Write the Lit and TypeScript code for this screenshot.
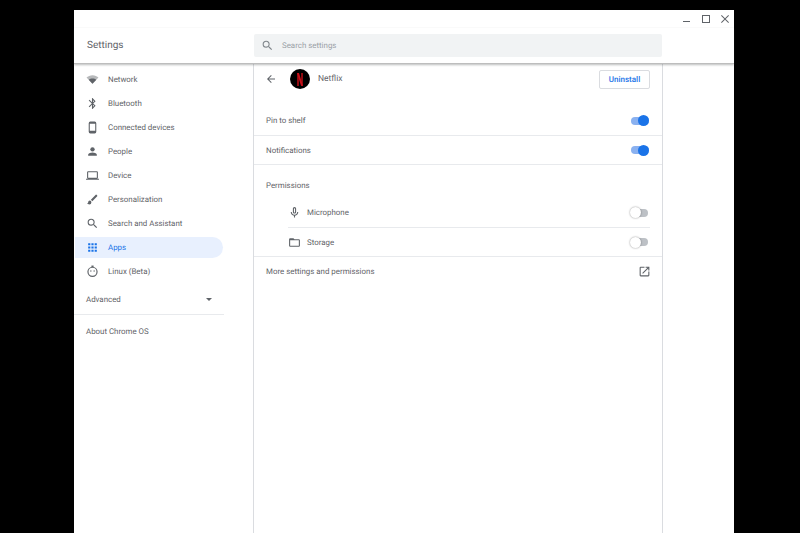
import { LitElement, css, html, svg } from 'lit';
import { customElement } from 'lit/decorators.js';
import { classMap } from 'lit/directives/class-map.js';
import { map } from 'lit/directives/map.js';

const SEARCH = svg`<path d="M15.500 14h-.79l-.28-.27A6.470 6.470 0 0 0 16 9.500 6.500 6.500 0 1 0 9.500 16c1.610 0 3.090-.59 4.230-1.570l.27.28v.79l5 4.990L20.490 19l-4.990-5zm-6 0C7.010 14 5 11.990 5 9.500S7.010 5 9.500 5 14 7.010 14 9.500 11.990 14 9.500 14z"/>`;

const NAV = [
  { label: 'Network', icon: svg`<path d="M12 20 1 8.500C3.500 6 7.500 4 12 4s8.500 2 11 4.500z" opacity=".45"/><path d="M12 20 5 12.500C7 10.800 9.300 10 12 10s5 .8 7 2.500z"/>` },
  { label: 'Bluetooth', icon: svg`<path d="M17.700 7.700 12 2h-1v7.600L6.400 5 5 6.400l5.600 5.600L5 17.600 6.400 19l4.600-4.600V22h1l5.700-5.700-4.300-4.300zM13 5.800l1.900 1.900L13 9.600zm1.900 10.500L13 18.200v-3.800z"/>` },
  { label: 'Connected devices', icon: svg`<path d="M16 1H8a3 3 0 0 0-3 3v16a3 3 0 0 0 3 3h8a3 3 0 0 0 3-3V4a3 3 0 0 0-3-3zm1 17H7V5h10z"/>` },
  { label: 'People', icon: svg`<circle cx="12" cy="8" r="4"/><path d="M12 14c-2.700 0-8 1.300-8 4v2h16v-2c0-2.700-5.300-4-8-4z"/>` },
  { label: 'Device', icon: svg`<path d="M20 18a2 2 0 0 0 2-2V6a2 2 0 0 0-2-2H4a2 2 0 0 0-2 2v10a2 2 0 0 0 2 2H0v2h24v-2zM4 6h16v10H4z"/>` },
  { label: 'Personalization', icon: svg`<path d="M7 14a3 3 0 0 0-3 3c0 1.300-1.200 2-2 2 .9 1.200 2.500 2 4 2a4 4 0 0 0 4-4 3 3 0 0 0-3-3zM20.700 4.600l-1.300-1.300a1 1 0 0 0-1.400 0L9 12.300 11.700 15l9-9a1 1 0 0 0 0-1.400z"/>` },
  { label: 'Search and Assistant', icon: SEARCH },
  { label: 'Apps', icon: svg`<path d="M4 4h4v4H4zm6 0h4v4h-4zm6 0h4v4h-4zM4 10h4v4H4zm6 0h4v4h-4zm6 0h4v4h-4zM4 16h4v4H4zm6 0h4v4h-4zm6 0h4v4h-4z"/>`, active: true },
  { label: 'Linux (Beta)', icon: svg`<path fill-rule="evenodd" d="M12 3a9.500 9.500 0 1 0 0 19 9.500 9.500 0 0 0 0-19zm0 2.200a7.300 7.300 0 1 1 0 14.600 7.300 7.300 0 0 1 0-14.600z"/><rect x="10" y="1" width="4" height="3"/><circle cx="9" cy="11" r="1.300"/><circle cx="15" cy="11" r="1.300"/>` },
];

@customElement('app-root')
export class AppRoot extends LitElement {
  static styles = css`
    :host {
      display: block;
      height: 533px;
      overflow: hidden;
      background: #000;
      font-family: Roboto, 'Liberation Sans', sans-serif;
      font-size: 7.900px;
      text-rendering: geometricPrecision;
      color: #5f6368;
    }

    * {
      box-sizing: border-box;
    }

    svg {
      display: block;
      fill: currentColor;
      flex: none;
    }

    .window {
      display: flex;
      flex-direction: column;
      width: 660px;
      height: 523px;
      margin: 10px 0 0 74px;
      background: #fff;
    }

    .controls {
      display: flex;
      justify-content: flex-end;
      align-items: center;
      gap: 7px;
      height: 18px;
      padding-right: 3px;
    }

    .header {
      display: flex;
      align-items: center;
      height: 36px;
      flex: none;
      border-bottom: 1px solid #bdbdbd;
      box-shadow: 0 1px 2px rgba(60, 64, 67, 0.35);
      position: relative;
    }

    .title {
      width: 180px;
      padding-left: 13px;
      font-size: 10px;
    }

    .search {
      display: flex;
      align-items: center;
      gap: 8px;
      width: 408px;
      height: 23px;
      padding-left: 7px;
      background: #f1f3f4;
      border-radius: 2px;
      color: #80868b;
    }

    .search span {
      color: #9aa0a6;
    }

    .body {
      display: flex;
      flex: 1;
      min-height: 0;
    }

    .nav {
      width: 179px;
      flex: none;
      padding-top: 5px;
    }

    .item {
      display: flex;
      align-items: center;
      gap: 9px;
      width: 148px;
      height: 21px;
      margin: 0 0 3px 1px;
      padding-left: 11px;
      border-radius: 0 11px 11px 0;
    }

    .item.active {
      background: #e8f0fe;
      color: #1a73e8;
    }

    .advanced {
      display: flex;
      justify-content: space-between;
      align-items: center;
      width: 150px;
      height: 30px;
      padding: 0 12px;
      margin-top: 2px;
      border-bottom: 1px solid #e8eaed;
    }

    .caret {
      width: 0;
      height: 0;
      border: 3px solid transparent;
      border-top-color: #5f6368;
      border-bottom: 0;
    }

    .about {
      padding: 12px 0 0 12px;
    }

    .main {
      width: 410px;
      flex: none;
      border-left: 1px solid #dadce0;
      border-right: 1px solid #dadce0;
    }

    .top {
      display: flex;
      align-items: center;
      height: 30px;
      padding: 0 12px 0 11px;
    }

    .logo {
      display: flex;
      align-items: center;
      justify-content: center;
      width: 20px;
      height: 20px;
      margin: 0 8px 0 13px;
      border-radius: 50%;
      background: #000;
    }

    .name {
      flex: 1;
      font-size: 8.500px;
    }

    .uninstall {
      width: 51px;
      height: 19px;
      padding: 0;
      background: #fff;
      border: 1px solid #dadce0;
      border-radius: 2px;
      color: #1a73e8;
      font: 500 8px Roboto, 'Liberation Sans', sans-serif;
      text-rendering: geometricPrecision;
    }

    .row {
      display: flex;
      align-items: center;
      justify-content: space-between;
      height: 29px;
      padding: 0 12px;
      border-bottom: 1px solid #e8eaed;
    }

    .row.first {
      margin-top: 12px;
      height: 30px;
    }

    .heading {
      height: 40px;
      padding: 0 12px;
      display: flex;
      align-items: center;
    }

    .subs {
      border-bottom: 1px solid #e8eaed;
      margin-top: -7px;
    }

    .sub {
      display: flex;
      align-items: center;
      height: 29px;
      margin: 0 12px 0 34px;
    }

    .sub + .sub {
      border-top: 1px solid #e8eaed;
    }

    .sub svg {
      margin-right: 6px;
    }

    .sub span {
      flex: 1;
    }

    .more {
      border-bottom: none;
    }

    .more svg {
      margin-right: -1px;
    }

    .toggle {
      position: relative;
      width: 17px;
      height: 8px;
      margin-right: 2px;
      border-radius: 4px;
      background: #bdc1c6;
    }

    .toggle::after {
      content: '';
      position: absolute;
      top: -1.500px;
      left: -1px;
      width: 11px;
      height: 11px;
      border-radius: 50%;
      background: #fff;
      box-shadow: 0 0 2px rgba(0, 0, 0, 0.45);
    }

    .toggle.on {
      background: #8ab1f0;
      margin-right: 1px;
      width: 18px;
    }

    .toggle.on::after {
      left: auto;
      right: 0;
      background: #1a73e8;
      box-shadow: none;
    }
  `;

  render() {
    return html`<div class="window">
      <div class="controls">
        <svg width="12" height="12" viewBox="0 0 12 12"><rect x="2" y="8" width="7" height="1"/></svg>
        <svg width="12" height="12" viewBox="0 0 12 12"><path d="M2 2h8v8H2zm1 1v6h6V3z"/></svg>
        <svg width="12" height="12" viewBox="0 0 12 12"><path d="M2.700 2 6 5.300 9.300 2l.7.7L6.700 6 10 9.300l-.7.7L6 6.700 2.700 10 2 9.300 5.300 6 2 2.700z"/></svg>
      </div>
      <div class="header">
        <div class="title">Settings</div>
        <div class="search">
          <svg width="13" height="13" viewBox="0 0 24 24">${SEARCH}</svg>
          <span>Search settings</span>
        </div>
      </div>
      <div class="body">
        <nav class="nav">
          ${map(
            NAV,
            (item) => html`<div class=${classMap({ item: true, active: !!item.active })}>
              <svg width="13" height="13" viewBox="0 0 24 24">${item.icon}</svg>
              <span>${item.label}</span>
            </div>`,
          )}
          <div class="advanced"><span>Advanced</span><i class="caret"></i></div>
          <div class="about">About Chrome OS</div>
        </nav>
        <main class="main">
          <div class="top">
            <svg width="12" height="12" viewBox="0 0 24 24"><path d="M20 11H7.800l5.600-5.600L12 4l-8 8 8 8 1.400-1.400L7.800 13H20z"/></svg>
            <div class="logo">
              <svg width="6" height="13" viewBox="0 0 6 13"><path fill="#8f0a10" d="M0 0h2v13L0 13z"/><path fill="#8f0a10" d="M4 0h2v13l-2-.2z"/><path fill="#c8101a" d="M0 0h2l4 13-2-.2z"/></svg>
            </div>
            <span class="name">Netflix</span>
            <button class="uninstall">Uninstall</button>
          </div>
          <div class="row first"><span>Pin to shelf</span><div class="toggle on"></div></div>
          <div class="row"><span>Notifications</span><div class="toggle on"></div></div>
          <div class="heading">Permissions</div>
          <div class="subs">
            <div class="sub">
              <svg width="13" height="13" viewBox="0 0 24 24"><path d="M12 14c1.660 0 3-1.340 3-3V5c0-1.660-1.340-3-3-3S9 3.340 9 5v6c0 1.660 1.340 3 3 3zm-1-9c0-.55.45-1 1-1s1 .45 1 1v6c0 .55-.45 1-1 1s-1-.45-1-1V5zm6 6c0 2.760-2.240 5-5 5s-5-2.240-5-5H5c0 3.530 2.610 6.430 6 6.920V21h2v-3.080c3.390-.49 6-3.390 6-6.920h-2z"/></svg>
              <span>Microphone</span><div class="toggle"></div>
            </div>
            <div class="sub">
              <svg width="13" height="13" viewBox="0 0 24 24"><path d="M20 6h-8l-2-2H4a2 2 0 0 0-2 2v12a2 2 0 0 0 2 2h16a2 2 0 0 0 2-2V8a2 2 0 0 0-2-2zm0 12H4V8h16z"/></svg>
              <span>Storage</span><div class="toggle"></div>
            </div>
          </div>
          <div class="row more">
            <span>More settings and permissions</span>
            <svg width="13" height="13" viewBox="0 0 24 24"><path d="M19 19H5V5h7V3H5a2 2 0 0 0-2 2v14a2 2 0 0 0 2 2h14a2 2 0 0 0 2-2v-7h-2zM14 3v2h3.600l-9.800 9.800 1.400 1.400L19 6.400V10h2V3z"/></svg>
          </div>
        </main>
      </div>
    </div>`;
  }
}
